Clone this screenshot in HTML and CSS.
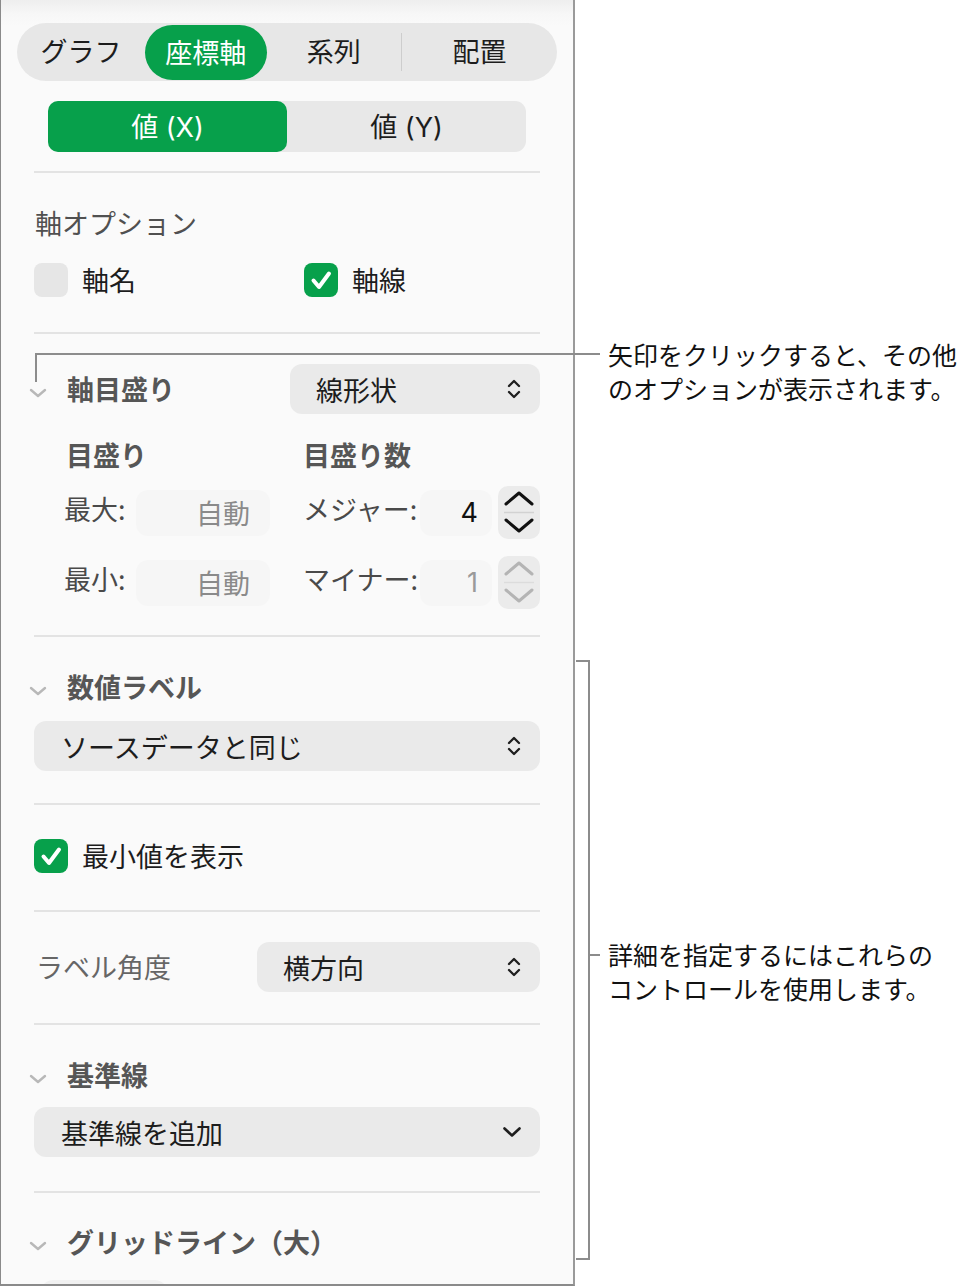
FILE: index.html
```html
<!DOCTYPE html>
<html lang="ja">
<head>
<meta charset="utf-8">
<title>座標軸</title>
<link rel="stylesheet" href="styles.css">
</head>
<body>
<div class="page">
  <aside class="panel">
    <div class="tabs">
      <div class="tab t1">グラフ</div>
      <div class="tab t2">座標軸</div>
      <div class="tab t3">系列</div>
      <div class="tab-div"></div>
      <div class="tab t4">配置</div>
    </div>
    <div class="seg">
      <div class="seg-item on">値 (X)</div>
      <div class="seg-item">値 (Y)</div>
    </div>
    <div class="content">
      <div class="sep m19"></div>

      <div class="plain-head m32">軸オプション</div>
      <div class="check-row m22">
        <div class="check-item w270">
          <span class="cb-off"></span><span class="cb-label">軸名</span>
        </div>
        <div class="check-item">
          <svg class="cb" viewBox="0 0 34 34"><rect width="34" height="34" rx="8" fill="#07a04b"/><path d="M9.5 17.5 L15 24 L25 10.5" stroke="#fff" stroke-width="4" fill="none" stroke-linecap="round" stroke-linejoin="round"/></svg>
          <span class="cb-label">軸線</span>
        </div>
      </div>
      <div class="sep m35"></div>

      <div class="head-row m30">
        <svg class="disc" viewBox="0 0 18 10"><path d="M2 2 L9 8 L16 2" stroke="#b8b8b8" stroke-width="2.4" fill="none" stroke-linecap="round" stroke-linejoin="round"/></svg>
        <span class="sec-title">軸目盛り</span>
        <div class="popup pop-scale">
          <span>線形状</span>
          <svg class="updown" viewBox="0 0 16 24"><path d="M3 9 L8 4 L13 9 M3 15 L8 20 L13 15" stroke="#1e1e1e" stroke-width="2.3" fill="none" stroke-linecap="round" stroke-linejoin="round"/></svg>
        </div>
      </div>

      <div class="sub-heads m23">
        <span class="sub-title w269">目盛り</span>
        <span class="sub-title">目盛り数</span>
      </div>

      <div class="val-row m13">
        <span class="val-label lbl-left">最大:</span>
        <div class="field f-auto">自動</div>
        <span class="val-label lbl-right">メジャー:</span>
        <div class="field f-num">4</div>
        <div class="stepper">
          <svg viewBox="0 0 42 53"><path d="M8 18 L21 7 L34 18" stroke="#111" stroke-width="3" fill="none" stroke-linecap="round" stroke-linejoin="round"/><path d="M6 26.5 H36" stroke="#d2d2d2" stroke-width="1.5"/><path d="M8 34 L21 45 L34 34" stroke="#111" stroke-width="3" fill="none" stroke-linecap="round" stroke-linejoin="round"/></svg>
        </div>
      </div>

      <div class="val-row m17">
        <span class="val-label lbl-left">最小:</span>
        <div class="field f-auto">自動</div>
        <span class="val-label lbl-right">マイナー:</span>
        <div class="field f-num dim">1</div>
        <div class="stepper">
          <svg viewBox="0 0 42 53"><path d="M8 18 L21 7 L34 18" stroke="#b4b4b4" stroke-width="3" fill="none" stroke-linecap="round" stroke-linejoin="round"/><path d="M6 26.5 H36" stroke="#dcdcdc" stroke-width="1.5"/><path d="M8 34 L21 45 L34 34" stroke="#b4b4b4" stroke-width="3" fill="none" stroke-linecap="round" stroke-linejoin="round"/></svg>
        </div>
      </div>
      <div class="sep m26"></div>

      <div class="title-row m32">
        <svg class="disc" viewBox="0 0 18 10"><path d="M2 2 L9 8 L16 2" stroke="#b8b8b8" stroke-width="2.4" fill="none" stroke-linecap="round" stroke-linejoin="round"/></svg>
        <span class="sec-title">数値ラベル</span>
      </div>
      <div class="popup pop-full m16">
        <span>ソースデータと同じ</span>
        <svg class="updown" viewBox="0 0 16 24"><path d="M3 9 L8 4 L13 9 M3 15 L8 20 L13 15" stroke="#1e1e1e" stroke-width="2.3" fill="none" stroke-linecap="round" stroke-linejoin="round"/></svg>
      </div>
      <div class="sep m32"></div>

      <div class="check-row m34">
        <div class="check-item">
          <svg class="cb" viewBox="0 0 34 34"><rect width="34" height="34" rx="8" fill="#07a04b"/><path d="M9.5 17.5 L15 24 L25 10.5" stroke="#fff" stroke-width="4" fill="none" stroke-linecap="round" stroke-linejoin="round"/></svg>
          <span class="cb-label">最小値を表示</span>
        </div>
      </div>
      <div class="sep m37"></div>

      <div class="angle-row m30">
        <span class="angle-label">ラベル角度</span>
        <div class="popup pop-angle">
          <span>横方向</span>
          <svg class="updown" viewBox="0 0 16 24"><path d="M3 9 L8 4 L13 9 M3 15 L8 20 L13 15" stroke="#1e1e1e" stroke-width="2.3" fill="none" stroke-linecap="round" stroke-linejoin="round"/></svg>
        </div>
      </div>
      <div class="sep m31"></div>

      <div class="title-row m32">
        <svg class="disc" viewBox="0 0 18 10"><path d="M2 2 L9 8 L16 2" stroke="#b8b8b8" stroke-width="2.4" fill="none" stroke-linecap="round" stroke-linejoin="round"/></svg>
        <span class="sec-title">基準線</span>
      </div>
      <div class="popup pop-full m14">
        <span>基準線を追加</span>
        <svg class="down" viewBox="0 0 20 12"><path d="M2.5 2.5 L10 9.5 L17.5 2.5" stroke="#1e1e1e" stroke-width="2.6" fill="none" stroke-linecap="round" stroke-linejoin="round"/></svg>
      </div>
      <div class="sep m34"></div>

      <div class="title-row m31">
        <svg class="disc" viewBox="0 0 18 10"><path d="M2 2 L9 8 L16 2" stroke="#b8b8b8" stroke-width="2.4" fill="none" stroke-linecap="round" stroke-linejoin="round"/></svg>
        <span class="sec-title">グリッドライン（大）</span>
      </div>
      <div class="cut-control m20"></div>
    </div>
  </aside>

  <div class="callout-top">
    <div class="lead-v"></div>
    <div class="lead-h"></div>
    <p class="note note-1">矢印をクリックすると、その他<br>のオプションが表示されます。</p>
  </div>

  <div class="callout-bracket">
    <div class="bracket"></div>
    <div class="bracket-tick"></div>
    <p class="note note-2">詳細を指定するにはこれらの<br>コントロールを使用します。</p>
  </div>
</div>
</body>
</html>
```

FILE: styles.css
```css
html, body {
  margin: 0;
  padding: 0;
  background: #ffffff;
}

body {
  font-family: "Noto Sans CJK JP", "Noto Sans", sans-serif;
  color: #1d1d1d;
}

.page {
  position: relative;
  width: 976px;
  height: 1287px;
  overflow: hidden;
}

/* ---------- panel ---------- */
.panel {
  box-sizing: border-box;
  width: 575px;
  height: 1286px;
  border-left: 1px solid #8a8a8a;
  border-right: 2px solid #9a9a9a;
  border-bottom: 2px solid #8a8a8a;
  background: linear-gradient(#eeeeee 0px, #f7f7f7 14px, #fafafa 26px);
  overflow: hidden;
  display: flex;
  flex-direction: column;
}

/* top tabs */
.tabs {
  margin: 23px 0 0 16px;
  width: 540px;
  height: 58px;
  border-radius: 29px;
  background: #e7e7e7;
  display: flex;
  align-items: center;
  flex-shrink: 0;
}

.tab {
  height: 55px;
  display: flex;
  align-items: center;
  justify-content: center;
  font-size: 27px;
  color: #1d1d1d;
  line-height: 1;
  padding-bottom: 3px;
  box-sizing: border-box;
}

.t1 { width: 128px; }
.t2 {
  width: 122px;
  border-radius: 28px;
  background: #07a04b;
  color: #ffffff;
  margin-top: 1px;
}
.t3 { width: 134px; }
.t4 { width: 155px; }

.tab-div {
  width: 1.5px;
  height: 38px;
  background: #cdcdcd;
}

/* value segmented control */
.seg {
  margin: 20px 0 0 47px;
  width: 478px;
  height: 51px;
  border-radius: 11px;
  background: #e8e8e8;
  display: flex;
  flex-shrink: 0;
}

.seg-item {
  flex: 1;
  display: flex;
  align-items: center;
  justify-content: center;
  font-family: "Inter", "Noto Sans CJK JP", sans-serif;
  font-size: 27px;
  color: #1d1d1d;
  border-radius: 10px;
  padding-bottom: 3px;
}

.seg-item.on {
  background: #07a04b;
  color: #ffffff;
}

/* content column */
.content {
  margin-left: 33px;
  width: 506px;
  display: flex;
  flex-direction: column;
  flex-shrink: 0;
}

.sep {
  height: 2px;
  background: #e3e3e3;
  flex-shrink: 0;
}

.m13 { margin-top: 13px; }
.m14 { margin-top: 14px; }
.m16 { margin-top: 16px; }
.m17 { margin-top: 17px; }
.m19 { margin-top: 19px; }
.m20 { margin-top: 20px; }
.m22 { margin-top: 22px; }
.m23 { margin-top: 23px; }
.m26 { margin-top: 26px; }
.m30 { margin-top: 30px; }
.m31 { margin-top: 31px; }
.m32 { margin-top: 32px; }
.m34 { margin-top: 34px; }
.m35 { margin-top: 35px; }
.m37 { margin-top: 37px; }

.plain-head {
  font-size: 27px;
  line-height: 36px;
  height: 36px;
  color: #505050;
  padding-left: 1px;
}

/* checkboxes */
.check-row {
  display: flex;
  align-items: center;
  height: 34px;
}

.check-item {
  display: flex;
  align-items: center;
}

.w270 { width: 270px; }

.cb-off {
  width: 34px;
  height: 34px;
  border-radius: 8px;
  background: #e6e6e6;
  flex-shrink: 0;
}

.cb {
  width: 34px;
  height: 34px;
  flex-shrink: 0;
  display: block;
}

.cb-label {
  margin-left: 14px;
  font-size: 27px;
  line-height: 36px;
  color: #1d1d1d;
}

/* section headers */
.disc {
  width: 18px;
  height: 10px;
  margin-left: -5px;
  margin-top: 8px;
  flex-shrink: 0;
  display: block;
}

.sec-title {
  margin-left: 20px;
  font-size: 27px;
  line-height: 36px;
  font-weight: 700;
  color: #565656;
}

.head-row {
  display: flex;
  align-items: center;
  height: 50px;
}

.title-row {
  display: flex;
  align-items: center;
  height: 36px;
}

/* popups */
.popup {
  box-sizing: border-box;
  height: 50px;
  border-radius: 12px;
  background: #eaeaea;
  display: flex;
  align-items: center;
  justify-content: space-between;
  padding: 0 18px 0 26px;
  font-size: 27px;
  color: #1d1d1d;
  flex-shrink: 0;
}

.pop-scale {
  margin-left: auto;
  width: 250px;
}

.pop-full {
  width: 506px;
  padding-left: 27px;
}

.pop-angle {
  width: 283px;
}

.updown {
  width: 16px;
  height: 24px;
  display: block;
}

.down {
  width: 20px;
  height: 12px;
  display: block;
}

/* tick rows */
.sub-heads {
  display: flex;
  height: 36px;
  padding-left: 32px;
}

.sub-title {
  font-size: 27px;
  line-height: 36px;
  font-weight: 700;
  color: #565656;
}

.w269 { width: 237px; }

.val-row {
  display: flex;
  align-items: center;
  height: 53px;
}

.val-label {
  font-size: 27px;
  line-height: 36px;
  color: #4a4a4a;
  margin-top: -8px;
}

.lbl-left {
  margin-left: 30px;
  width: 72px;
}

.lbl-right {
  margin-left: 33px;
  width: 117px;
}

.field {
  box-sizing: border-box;
  height: 46px;
  border-radius: 12px;
  background: #f6f6f6;
  font-size: 27px;
  display: flex;
  align-items: center;
  justify-content: flex-end;
}

.f-auto {
  width: 134px;
  padding-right: 20px;
  color: #8a8a8a;
}

.f-num {
  width: 72px;
  padding-right: 14px;
  color: #111111;
  font-family: "Inter", "Noto Sans", sans-serif;
  font-size: 27px;
}

.f-num.dim {
  color: #9a9a9a;
}

.stepper {
  margin-left: 6px;
  width: 42px;
  height: 53px;
  border-radius: 10px;
  background: #ebebeb;
  flex-shrink: 0;
}

.stepper svg {
  width: 42px;
  height: 53px;
  display: block;
}

/* label angle */
.angle-row {
  display: flex;
  align-items: center;
  justify-content: space-between;
  height: 50px;
}

.angle-label {
  margin-left: 2px;
  font-size: 27px;
  line-height: 36px;
  color: #666666;
}

.cut-control {
  margin-left: 7px;
  width: 126px;
  height: 12px;
  border-radius: 12px 12px 0 0;
  background: #f1f1f1;
}

/* ---------- callouts (annotation overlay) ---------- */
.callout-top,
.callout-bracket {
  position: absolute;
  left: 0;
  top: 0;
  width: 976px;
  height: 0;
}

.lead-v {
  position: absolute;
  left: 35px;
  top: 353px;
  width: 2px;
  height: 29px;
  background: #8c8c8c;
}

.lead-h {
  position: absolute;
  left: 35px;
  top: 353px;
  width: 565px;
  height: 2px;
  background: #8c8c8c;
}

.note {
  position: absolute;
  margin: 0;
  left: 608px;
  font-size: 25px;
  line-height: 34px;
  color: #111111;
  white-space: nowrap;
}

.note-1 { top: 337px; }
.note-2 { top: 937px; }

.bracket {
  position: absolute;
  left: 576px;
  top: 660px;
  width: 12px;
  height: 596px;
  border-top: 2px solid #8c8c8c;
  border-right: 2px solid #8c8c8c;
  border-bottom: 2px solid #8c8c8c;
}

.bracket-tick {
  position: absolute;
  left: 590px;
  top: 954px;
  width: 10px;
  height: 2px;
  background: #8c8c8c;
}
```
